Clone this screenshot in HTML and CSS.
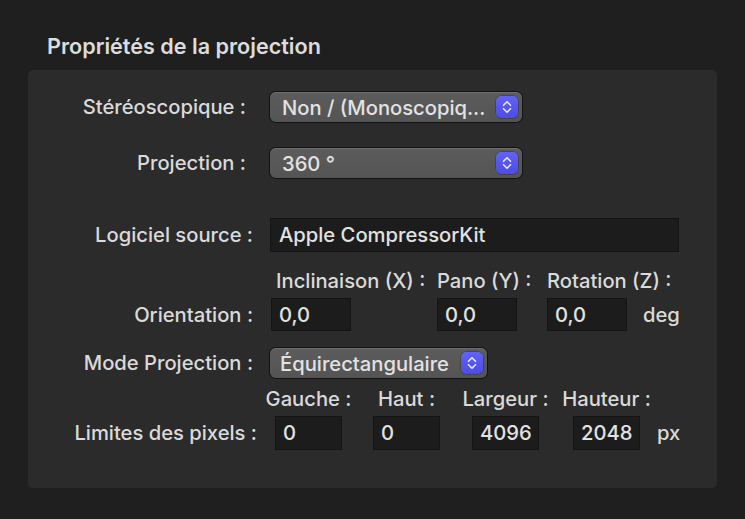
FILE: index.html
```html
<!DOCTYPE html>
<html lang="fr">
<head>
<meta charset="utf-8">
<title>Propriétés de la projection</title>
<link rel="stylesheet" href="styles.css">
</head>
<body>
<div class="page">
  <h1 class="title">Propriétés de la projection</h1>
  <div class="panel">
    <div class="row row-stereo">
      <div class="label label-a">Stéréoscopique :</div>
      <div class="popup popup-wide">
        <span class="popup-text">Non / (Monoscopiq...</span>
        <span class="stepper"><svg viewBox="0 0 22 22" width="22" height="22"><path d="M7.5 9.3 L11 5.8 L14.5 9.3 M7.5 12.7 L11 16.2 L14.5 12.7" fill="none" stroke="#e8e8ff" stroke-width="1.6" stroke-linecap="round" stroke-linejoin="round"/></svg></span>
      </div>
    </div>
    <div class="row row-proj">
      <div class="label label-a">Projection :</div>
      <div class="popup popup-wide">
        <span class="popup-text">360 °</span>
        <span class="stepper"><svg viewBox="0 0 22 22" width="22" height="22"><path d="M7.5 9.3 L11 5.8 L14.5 9.3 M7.5 12.7 L11 16.2 L14.5 12.7" fill="none" stroke="#e8e8ff" stroke-width="1.6" stroke-linecap="round" stroke-linejoin="round"/></svg></span>
      </div>
    </div>
    <div class="row row-source">
      <div class="label label-b">Logiciel source :</div>
      <div class="field field-source">Apple CompressorKit</div>
    </div>
    <div class="row row-orient">
      <div class="label label-b label-tall">Orientation :</div>
      <div class="orient-grid">
        <div class="hdr hdr-first">Inclinaison (X) :</div>
        <div class="hdr">Pano (Y) :</div>
        <div class="hdr">Rotation (Z) :</div>
        <div></div>
        <div class="field field-angle">0,0</div>
        <div class="field field-angle">0,0</div>
        <div class="field field-angle">0,0</div>
        <div class="unit unit-deg">deg</div>
      </div>
    </div>
    <div class="row row-mode">
      <div class="label label-b">Mode Projection :</div>
      <div class="popup popup-mode">
        <span class="popup-text">Équirectangulaire</span>
        <span class="stepper"><svg viewBox="0 0 22 22" width="22" height="22"><path d="M7.5 9.3 L11 5.8 L14.5 9.3 M7.5 12.7 L11 16.2 L14.5 12.7" fill="none" stroke="#e8e8ff" stroke-width="1.6" stroke-linecap="round" stroke-linejoin="round"/></svg></span>
      </div>
    </div>
    <div class="row row-pixels">
      <div class="label label-c label-tall">Limites des pixels :</div>
      <div class="pix-col pix-gauche">
        <div class="hdr">Gauche :</div>
        <div class="field field-pix">0</div>
      </div>
      <div class="pix-col pix-haut">
        <div class="hdr">Haut :</div>
        <div class="field field-pix">0</div>
      </div>
      <div class="pix-col pix-largeur">
        <div class="hdr">Largeur :</div>
        <div class="field field-pix">4096</div>
      </div>
      <div class="pix-col pix-hauteur">
        <div class="hdr">Hauteur :</div>
        <div class="field field-pix">2048</div>
      </div>
      <div class="unit unit-px">px</div>
    </div>
  </div>
</div>
</body>
</html>
```
FILE: styles.css
```css
html, body {
  margin: 0;
  padding: 0;
  background: #1f1f1f;
}

body {
  font-family: "Inter", "Helvetica Neue", "Liberation Sans", sans-serif;
  font-weight: 500;
  font-size: 20.2px;
  color: #dadada;
  width: 745px;
  height: 519px;
  overflow: hidden;
}

.page {
  padding: 0 28px;
}

.title {
  margin: 0;
  padding: 34px 0 0 19px;
  height: 70px;
  box-sizing: border-box;
  font-size: 21.6px;
  line-height: 24px;
  font-weight: 600;
  color: #dcdcdc;
}

.panel {
  width: 689px;
  height: 418px;
  box-sizing: border-box;
  background: #2b2b2b;
  border-radius: 5px;
  padding-top: 22px;
}

.row {
  display: flex;
  align-items: center;
}

.label {
  text-align: right;
  white-space: nowrap;
  line-height: 22px;
}

.label-a { width: 218px; margin-right: 24px; }
.label-b { width: 225px; margin-right: 17px; }
.label-c { width: 229px; margin-right: 18px; }

.label-tall {
  line-height: 34px;
}

.row-proj { margin-top: 26px; }
.row-source { margin-top: 40px; }
.row-orient { margin-top: 19px; align-items: flex-end; }
.row-mode { margin-top: 16px; }
.row-pixels { margin-top: 11px; align-items: flex-end; }

/* popup buttons */
.popup {
  height: 30px;
  box-sizing: border-box;
  background: linear-gradient(#5c5c5c, #545454);
  border-radius: 6px;
  box-shadow: 0 0 0 1px rgba(0, 0, 0, 0.55), inset 0 1px 0 rgba(255, 255, 255, 0.12);
  display: flex;
  align-items: center;
  justify-content: space-between;
  padding: 0 4px 0 12px;
  color: #e2e2e2;
  white-space: nowrap;
}

.popup-wide { width: 252px; }
.popup-mode { width: 217px; padding-left: 10px; }

.stepper {
  width: 22px;
  height: 22px;
  flex: none;
  border-radius: 5px;
  background: linear-gradient(#6262f6, #4c4ce6);
  box-shadow: 0 0 0 0.5px rgba(0, 0, 0, 0.4);
  display: flex;
}

/* text fields */
.field {
  height: 34px;
  box-sizing: border-box;
  background: #1c1c1c;
  border: 1px solid #141414;
  color: #e2e2e2;
  line-height: 32px;
  padding-left: 8px;
  white-space: nowrap;
}

.field-source {
  width: 409px;
}

/* orientation */
.orient-grid {
  display: grid;
  grid-template-columns: 166px 110px 96px auto;
  grid-template-rows: 20px 34px;
  row-gap: 7px;
  margin-left: 1px;
}

.hdr {
  line-height: 20px;
  white-space: nowrap;
}

.hdr-first { padding-left: 5px; }

.field-angle {
  width: 80px;
  height: 33px;
  padding-left: 7px;
}

.unit {
  line-height: 34px;
  white-space: nowrap;
}

/* pixels */
.pix-col {
  display: flex;
  flex-direction: column;
  align-items: center;
  width: 67px;
  gap: 7px;
}

.pix-col .hdr {
  width: 110px;
  text-align: center;
}

.field-pix {
  width: 67px;
  padding-left: 7px;
}

.pix-haut { margin-left: 31px; }
.pix-largeur { margin-left: 32px; }
.pix-hauteur { margin-left: 34px; }

.unit-px { margin-left: 17px; }
```
